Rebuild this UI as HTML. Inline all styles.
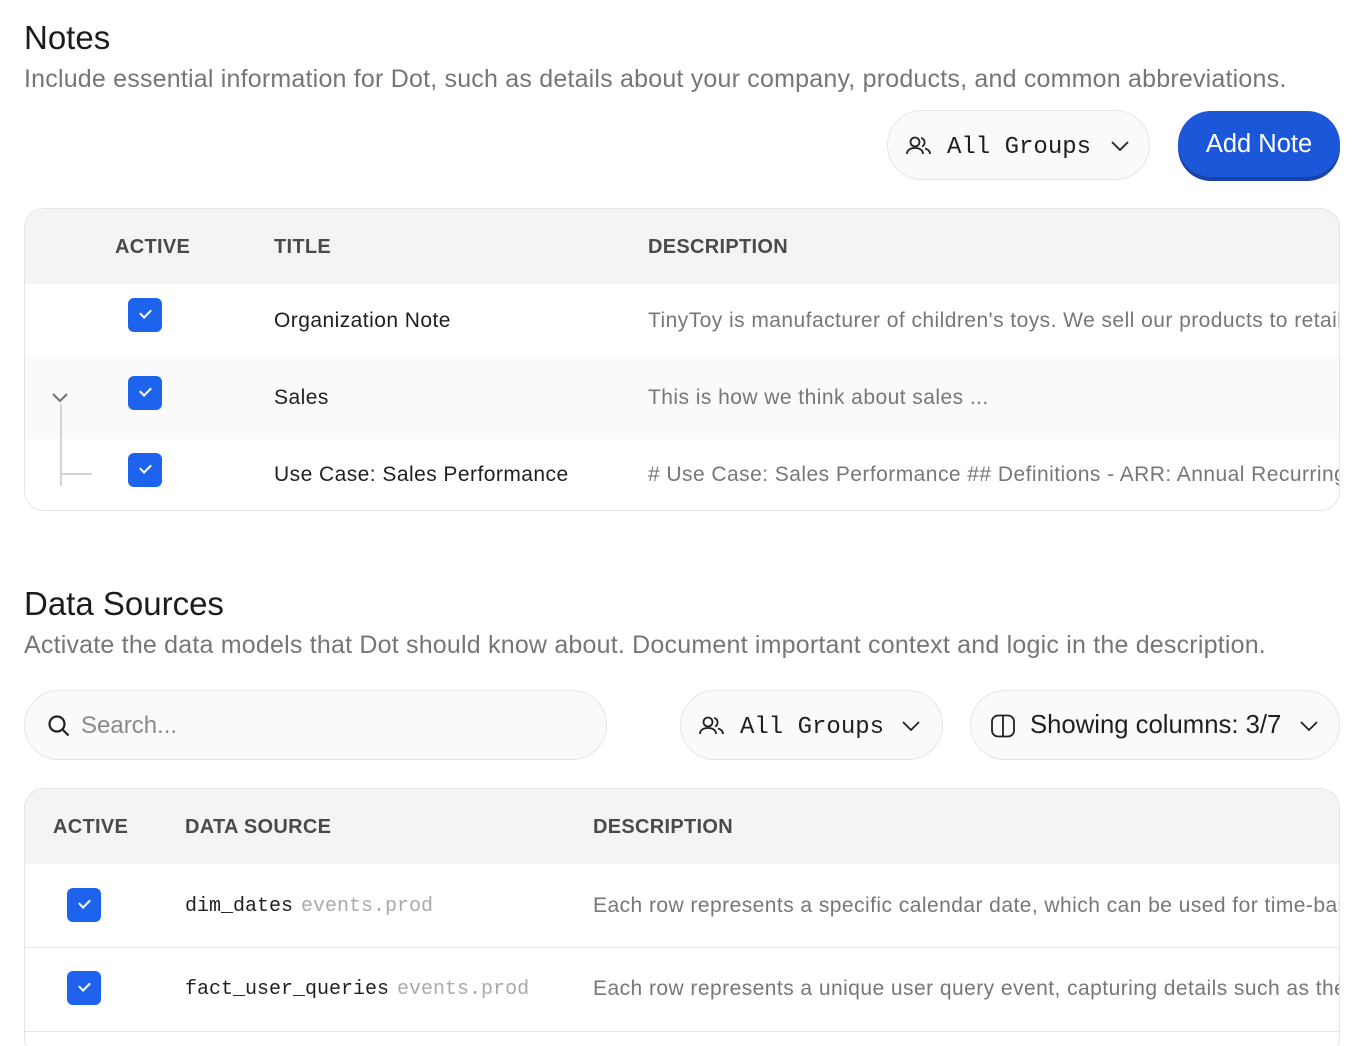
<!DOCTYPE html>
<html><head><meta charset="utf-8"><style>
*{box-sizing:border-box;margin:0;padding:0}
html{width:1371px;height:1046px;overflow:hidden}
body{width:1371px;height:1046px;overflow:hidden;background:#fff;font-family:"Liberation Sans",sans-serif;color:#1f1f1f;position:relative}
.a{position:absolute;white-space:nowrap}
h1{position:absolute;font-weight:400;font-size:33px;color:#1c1c1c}
.sub{font-size:25px;color:#767676;letter-spacing:.2px}
.pill{position:absolute;border:1px solid #e6e6e6;background:#fafafa;border-radius:35px;height:70px;display:flex;align-items:center;font-size:24px}
.mono{font-family:"Liberation Mono",monospace}
.tbl{position:absolute;left:24px;width:1316px;border:1px solid #e4e4e4;border-radius:20px;overflow:hidden;background:#fff}
.hd{position:absolute;left:0;right:0;top:0;height:75px;background:#f4f4f4}
.th{position:absolute;font-size:20px;font-weight:700;color:#4a4a4a;letter-spacing:.3px}
.td{position:absolute;font-size:21px;white-space:nowrap;letter-spacing:.45px}
.td.mono{font-size:20px;letter-spacing:0}
.g{color:#777}
.cb{position:absolute;width:34px;height:34px;background:#1d63ed;border-radius:6px}
.cb:after{content:"";position:absolute;left:12px;top:11px;width:9px;height:5px;border-left:2.5px solid #fff;border-bottom:2.5px solid #fff;transform:rotate(-45deg)}
</style></head><body>
<h1 style="left:24px;top:19px">Notes</h1>
<div class="a sub" style="left:24px;top:65px">Include essential information for Dot, such as details about your company, products, and common abbreviations.</div>

<div class="pill" style="left:887px;top:110px;width:263px">
<svg style="position:absolute;left:18px;top:25px" width="28" height="20" viewBox="0 0 28 20" fill="none" stroke="#222" stroke-width="1.8"><circle cx="9" cy="6" r="4.5"/><path d="M1 18c0-4 3.5-6 8-6s8 2 8 6"/><path d="M15 2a4.5 4.5 0 0 1 1 8.5M19 12.5c3 .8 5 2.6 5 5.5"/></svg>
<span class="mono" style="position:absolute;left:59px;top:23px">All Groups</span>
<svg style="position:absolute;left:222px;top:29px" width="20" height="12" viewBox="0 0 20 12" fill="none" stroke="#222" stroke-width="1.8"><path d="M2 2l8 8 8-8"/></svg>
</div>
<div class="a" style="left:1178px;top:111px;width:162px;height:66px;border-radius:35px;background:#1c56d9;box-shadow:0 4px 0 #1843a8;color:#fff;font-size:25.5px;display:flex;align-items:center;justify-content:center">Add Note</div>

<div class="tbl" style="top:208px;height:303px">
<div class="hd"></div>
<div class="th" style="left:90px;top:27px">ACTIVE</div>
<div class="th" style="left:249px;top:27px">TITLE</div>
<div class="th" style="left:623px;top:27px">DESCRIPTION</div>
<div style="position:absolute;left:0;right:0;top:148px;height:82px;background:#fafafa"></div>
<div class="cb" style="left:103px;top:89px"></div>
<div class="td" style="left:249px;top:100px">Organization Note</div>
<div class="td g" style="left:623px;top:100px">TinyToy is manufacturer of children's toys. We sell our products to retailers</div>
<svg style="position:absolute;left:26px;top:183px" width="18" height="12" viewBox="0 0 18 12" fill="none" stroke="#777" stroke-width="2.2"><path d="M2 2l7 7 7-7"/></svg>
<div style="position:absolute;left:35px;top:195px;width:2px;height:82px;background:#d4d4d4"></div>
<div style="position:absolute;left:35px;top:264px;width:32px;height:2px;background:#d4d4d4"></div>
<div class="cb" style="left:103px;top:167px"></div>
<div class="td" style="left:249px;top:177px">Sales</div>
<div class="td g" style="left:623px;top:177px">This is how we think about sales ...</div>
<div class="cb" style="left:103px;top:244px"></div>
<div class="td" style="left:249px;top:254px">Use Case: Sales Performance</div>
<div class="td g" style="left:623px;top:254px"># Use Case: Sales Performance ## Definitions - ARR: Annual Recurring Revenue</div>
</div>

<h1 style="left:24px;top:585px">Data Sources</h1>
<div class="a sub" style="left:24px;top:631px">Activate the data models that Dot should know about. Document important context and logic in the description.</div>

<div class="pill" style="left:24px;top:690px;width:583px">
<svg style="position:absolute;left:22px;top:23px" width="24" height="24" viewBox="0 0 24 24" fill="none" stroke="#222" stroke-width="2.2"><circle cx="10" cy="10" r="7.5"/><path d="M15.5 15.5l6 6"/></svg>
<span style="position:absolute;left:56px;top:21px;color:#8a8a8a">Search...</span>
</div>
<div class="pill" style="left:680px;top:690px;width:263px">
<svg style="position:absolute;left:18px;top:25px" width="28" height="20" viewBox="0 0 28 20" fill="none" stroke="#222" stroke-width="1.8"><circle cx="9" cy="6" r="4.5"/><path d="M1 18c0-4 3.5-6 8-6s8 2 8 6"/><path d="M15 2a4.5 4.5 0 0 1 1 8.5M19 12.5c3 .8 5 2.6 5 5.5"/></svg>
<span class="mono" style="position:absolute;left:59px;top:23px">All Groups</span>
<svg style="position:absolute;left:220px;top:29px" width="20" height="12" viewBox="0 0 20 12" fill="none" stroke="#222" stroke-width="1.8"><path d="M2 2l8 8 8-8"/></svg>
</div>
<div class="pill" style="left:970px;top:690px;width:370px">
<svg style="position:absolute;left:19px;top:23px" width="26" height="24" viewBox="0 0 26 24" fill="none" stroke="#222" stroke-width="1.8"><rect x="2" y="1.5" width="22" height="21" rx="6"/><path d="M13 1.5v21"/></svg>
<span style="position:absolute;left:59px;top:20px;font-size:25.7px">Showing columns: 3/7</span>
<svg style="position:absolute;left:328px;top:29px" width="20" height="12" viewBox="0 0 20 12" fill="none" stroke="#222" stroke-width="1.8"><path d="M2 2l8 8 8-8"/></svg>
</div>

<div class="tbl" style="top:788px;height:270px">
<div class="hd"></div>
<div class="th" style="left:28px;top:27px">ACTIVE</div>
<div class="th" style="left:160px;top:27px">DATA SOURCE</div>
<div class="th" style="left:568px;top:27px">DESCRIPTION</div>
<div class="cb" style="left:42px;top:99px"></div>
<div class="td mono" style="left:160px;top:106px">dim_dates<span style="color:#aaa;margin-left:8px">events.prod</span></div>
<div class="td g" style="left:568px;top:105px">Each row represents a specific calendar date, which can be used for time-based analysis</div>
<div style="position:absolute;left:0;right:0;top:158px;height:1px;background:#e6e6e6"></div>
<div class="cb" style="left:42px;top:182px"></div>
<div class="td mono" style="left:160px;top:189px">fact_user_queries<span style="color:#aaa;margin-left:8px">events.prod</span></div>
<div class="td g" style="left:568px;top:188px">Each row represents a unique user query event, capturing details such as the query</div>
<div style="position:absolute;left:0;right:0;top:242px;height:1px;background:#e6e6e6"></div>
</div>
</body></html>
